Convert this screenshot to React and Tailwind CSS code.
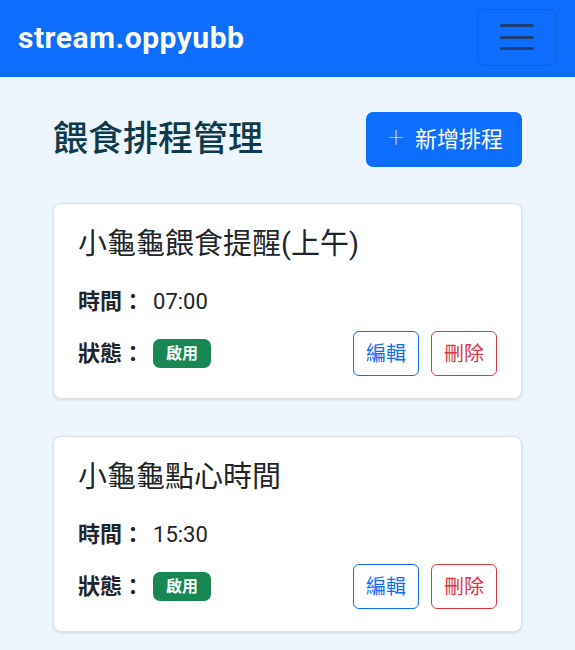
import React from 'react';

const schedules = [
  { title: '小龜龜餵食提醒(上午)', time: '07:00', status: '啟用' },
  { title: '小龜龜點心時間', time: '15:30', status: '啟用' },
];

const font = { fontFamily: 'Roboto, "Noto Sans CJK TC", sans-serif' };

const App = () => {
  return (
    <div className="min-h-screen bg-[#edf5fd]" style={font}>
      {/* Navbar */}
      <nav className="h-[77px] bg-[#0d6efd] flex items-center justify-between pl-[18px] pr-[18px]">
        <span className="text-white text-[30px] font-bold tracking-[0.5px] -mt-[3px]">stream.oppyubb</span>
        <button className="w-[80px] h-[57px] -mt-[3px] rounded-[8px] border border-[rgba(0,0,0,0.12)] flex flex-col items-center justify-center gap-[8.5px]">
          <span className="block w-[34px] h-[3px] rounded-full bg-[#1d3f75]" />
          <span className="block w-[34px] h-[3px] rounded-full bg-[#1d3f75]" />
          <span className="block w-[34px] h-[3px] rounded-full bg-[#1d3f75]" />
        </button>
      </nav>

      <main className="px-[53px] pt-[35px] pb-10">
        {/* Header row */}
        <div className="flex items-center justify-between">
          <h1 className="text-[35px] font-medium text-[#0f3a4c] leading-none">餵食排程管理</h1>
          <button className="h-[55px] pl-[22px] pr-[19px] rounded-[7px] bg-[#0d6efd] text-white text-[22px] flex items-center gap-[11px]">
            <span className="text-[28px] font-thin leading-none -mt-[3px]">+</span>
            <span>新增排程</span>
          </button>
        </div>

        {/* Schedule cards */}
        <div className="mt-[36px] flex flex-col gap-[37px]">
          {schedules.map((s, i) => (
            <div
              key={i}
              className="bg-white border border-[#dee2e6] rounded-[8px] shadow-[0_1px_3px_rgba(0,0,0,0.12)] px-[24px] pt-[23px] pb-[22px]"
            >
              <h5 className="text-[29px] leading-[34px] text-[#212529]">{s.title}</h5>
              <p className="mt-[24px] h-[32px] flex items-center text-[22px] text-[#212529]">
                <span className="font-bold">時間：</span>
                <span className="ml-[9px]">{s.time}</span>
              </p>
              <div className="mt-[14px] flex items-center justify-between">
                <div className="flex items-center text-[22px] text-[#212529]">
                  <span className="font-bold">狀態：</span>
                  <span className="ml-[9px] h-[29px] px-[13px] rounded-[7px] bg-[#198754] text-white text-[16px] font-bold flex items-center">
                    {s.status}
                  </span>
                </div>
                <div className="flex gap-[12px]">
                  <button className="w-[66px] h-[45px] rounded-[6px] border border-[#0d6efd] text-[#0d6efd] text-[20px]">
                    編輯
                  </button>
                  <button className="w-[66px] h-[45px] rounded-[6px] border border-[#dc3545] text-[#dc3545] text-[20px]">
                    刪除
                  </button>
                </div>
              </div>
            </div>
          ))}
        </div>
      </main>
    </div>
  );
};

export default App;
